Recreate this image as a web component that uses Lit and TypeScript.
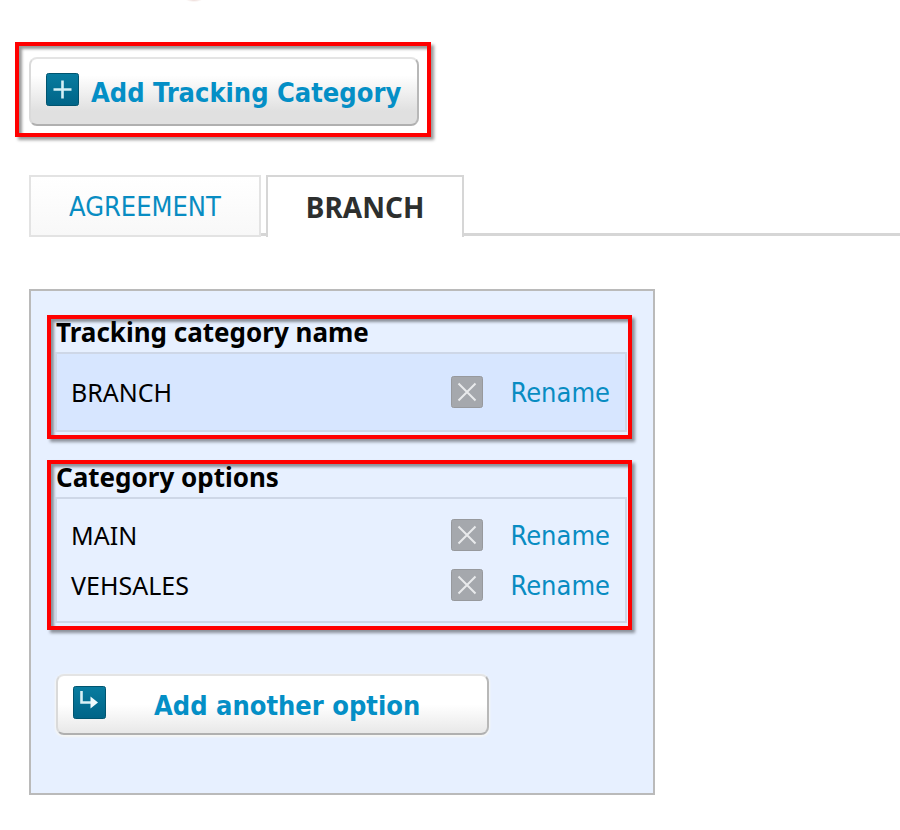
import { LitElement, html, css, svg } from "lit";
import { customElement, state } from "lit/decorators.js";

const plusIcon = svg`
  <rect x="0.5" y="0.5" width="32" height="32" rx="2" fill="url(#teal)" stroke="#00546f"/>
  <path d="M16.5 7.5v18M7.5 16.5h18" fill="none" stroke="#d4eff5" stroke-width="2.6"/>`;

const branchIcon = svg`
  <rect x="0.5" y="0.5" width="32" height="32" rx="2" fill="url(#teal)" stroke="#00546f"/>
  <path d="M8.5 5v11.5h10" fill="none" stroke="#d9f1f6" stroke-width="2.6"/>
  <path d="M17.5 10.5l7.5 6-7.5 6z" fill="#f1fbfd"/>`;

@customElement("app-root")
export class AppRoot extends LitElement {
  @state() private active = "BRANCH";
  private tabs = ["AGREEMENT", "BRANCH"];
  private options = ["MAIN", "VEHSALES"];

  static styles = css`
    :host {
      display: block;
      box-sizing: border-box;
      padding: 42px 0 35px;
      background: radial-gradient(ellipse 8px 2px at 194px 0, #ecd9d5, #fff) no-repeat #fff;
      color: #000;
      font: 27px/32px "DejaVu Sans Condensed", "Noto Sans", sans-serif;
    }
    *, *::before, *::after { box-sizing: border-box; }
    button { font: inherit; color: inherit; cursor: pointer; }
    svg { display: block; flex: none; }
    a { padding-top: 2px; color: #088cc2; text-decoration: none; }

    .frame {
      border: 4px solid #f00;
      box-shadow: 3px 3px 3px rgba(0, 0, 0, 0.4), inset 3px 3px 3px rgba(0, 0, 0, 0.4);
    }
    .toolbar {
      width: fit-content;
      margin-left: 15px;
      padding: 11px 8px 7px 10px;
    }
    .action {
      display: flex;
      align-items: center;
      border: 2px solid;
      border-color: #e4e4e4 #b8b8b8 #b0b0b0 #dadada;
      border-radius: 8px;
      color: #048fc6;
      font-weight: bold;
      white-space: nowrap;
    }
    .action svg { margin-bottom: 4px; }
    .action span { padding-top: 2px; }
    .add-category {
      width: 390px;
      height: 69px;
      padding: 0 15px;
      gap: 12px;
      background: linear-gradient(#fff 25%, #e0e0e0 80%);
    }
    .add-option {
      width: 433px;
      height: 61px;
      margin: 44px 0 0 9px;
      padding: 0 15px;
      gap: 48px;
      background: linear-gradient(#fff 50%, #e8e8e8);
      box-shadow: 0 1px 2px 1px #f6f6f4;
    }

    .tabs {
      display: flex;
      gap: 5px;
      margin-top: 38px;
      padding-left: 29px;
      background: linear-gradient(#d6d6d6, #d6d6d6) 29px 58px / 100% 3px no-repeat;
    }
    .tab {
      height: 62px;
      padding: 2px 38px 0;
      border: 2px solid #e3e3e3;
      background: linear-gradient(#fff, #f8f8f8);
      color: #088cc2;
    }
    .tab.active {
      padding-top: 0;
      border-color: #d6d6d6;
      border-bottom: 0;
      background: #fff;
      color: #2d2f2e;
      font-family: "Noto Sans", sans-serif;
      font-size: 28px;
      font-weight: bold;
    }

    .panel {
      max-width: 626px;
      margin: 52px 0 0 29px;
      padding: 24px 21px 58px 16px;
      border: 2px solid #bababa;
      background: #e7f0ff;
    }
    .group { padding: 0 1px 3px 4px; }
    .group + .group { margin-top: 21px; }
    h2 {
      margin: 0;
      padding: 0 0 7px 1px;
      font: bold 26px/26px "Noto Sans", sans-serif;
    }
    ul {
      margin: 0;
      padding: 11px 15px 11px 14px;
      border: 2px solid #ced7e7;
      list-style: none;
    }
    .name ul { padding-block: 13px; background: #d7e6ff; }
    li { display: flex; align-items: center; height: 50px; }
    .label { flex: 1; font-family: "Noto Sans", sans-serif; font-size: 25px; }
    .remove { padding: 0; border: 0; background: none; margin-right: 27px; }
  `;

  private icon(shape: unknown) {
    return html`<svg width="33" height="33" viewBox="0 0 33 33" aria-hidden="true">
      <defs><linearGradient id="teal" x2="0" y2="1">
        <stop stop-color="#087ca0"/><stop offset="1" stop-color="#006487"/>
      </linearGradient></defs>${shape}</svg>`;
  }

  private row(name: string) {
    return html`<li>
      <span class="label">${name}</span>
      <button class="remove" aria-label="Delete ${name}">
        <svg width="32" height="32" viewBox="0 0 32 32" aria-hidden="true">
          <rect x="0.5" y="0.5" width="31" height="31" rx="2" fill="#a5a8ad" stroke="#97999d"/>
          <path d="M7.5 7.5l17 17M24.5 7.5l-17 17" fill="none" stroke="#e9eaec" stroke-width="2"/>
        </svg>
      </button>
      <a href="#rename">Rename</a>
    </li>`;
  }

  render() {
    return html`
      <div class="toolbar frame">
        <button class="action add-category">${this.icon(plusIcon)}<span>Add Tracking Category</span></button>
      </div>
      <div class="tabs" role="tablist">
        ${this.tabs.map((t) => html`<button role="tab"
          class="tab ${t === this.active ? "active" : ""}"
          aria-selected=${t === this.active}
          @click=${() => (this.active = t)}>${t}</button>`)}
      </div>
      <section class="panel">
        <div class="group name frame">
          <h2>Tracking category name</h2>
          <ul>${this.row(this.active)}</ul>
        </div>
        <div class="group frame">
          <h2>Category options</h2>
          <ul>${this.options.map((o) => this.row(o))}</ul>
        </div>
        <button class="action add-option">${this.icon(branchIcon)}<span>Add another option</span></button>
      </section>`;
  }
}
